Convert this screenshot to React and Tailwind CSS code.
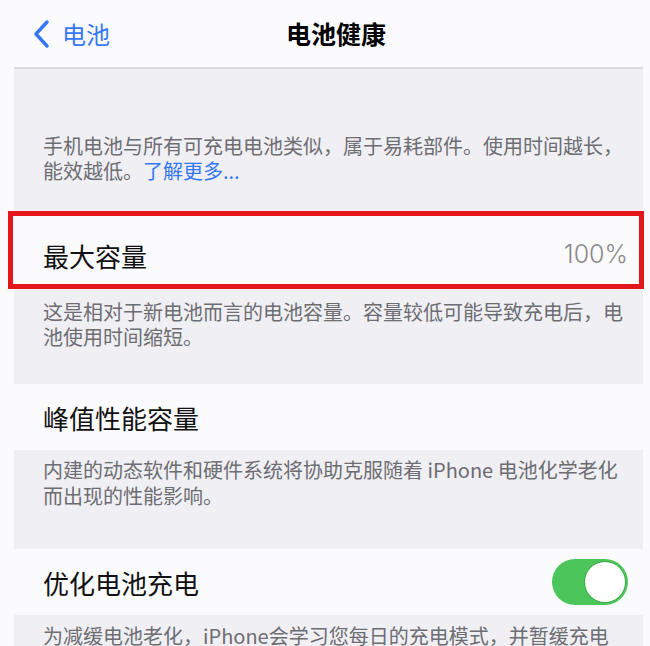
import React, { useState } from "react";

const cjk = { fontFamily: '"Noto Sans CJK SC", "Noto Sans", sans-serif' };

// iOS style on/off switch
function Toggle({ on, onChange }) {
  return (
    <button
      onClick={() => onChange(!on)}
      className={`flex h-[46px] w-[76px] items-center rounded-full p-[3px] transition ${
        on ? "justify-end bg-[#4cc55a]" : "justify-start bg-[#e5e5ea]"
      }`}
    >
      <span className="h-[40px] w-[40px] rounded-full bg-white shadow-[0_0_0_1px_rgba(40,120,40,0.35)]" />
    </button>
  );
}

function Footer({ className, children }) {
  return (
    <div
      className={`bg-[#efeff4] pl-[29px] pr-[12px] text-[20px] leading-[25px] text-[#6d6d72] ${className}`}
    >
      {children}
    </div>
  );
}

function Row({ title, className = "", children }) {
  return (
    <div className={`flex items-center justify-between bg-[#fbfbfd] pl-[29px] pr-[15px] ${className}`}>
      <span className="text-[26px] text-[#111]">{title}</span>
      {children}
    </div>
  );
}

export default function App() {
  const [optimized, setOptimized] = useState(true);

  return (
    <div className="h-[646px] overflow-hidden bg-[#fbfbfd]" style={cjk}>
      <div className="ml-[14px] mr-[7px]">
        {/* nav bar */}
        <header className="grid h-[67px] grid-cols-[1fr_auto_1fr] items-center pl-[19px] pr-[4px]">
          <button className="flex items-center gap-[12px] text-[#3478f6]">
            <svg width="17" height="28" viewBox="0 0 17 28" fill="none">
              <path d="M14 2 L3 14 L14 26" stroke="currentColor" strokeWidth="3.4" strokeLinecap="round" strokeLinejoin="round" />
            </svg>
            <span className="text-[24px] leading-none">电池</span>
          </button>
          <h1 className="text-[25px] font-bold leading-none text-black">电池健康</h1>
          <span />
        </header>
        <div className="h-[2px] bg-[#d9d9de]" />

        <Footer className="flex h-[142px] flex-col justify-end pb-[28px]">
          <p>
            手机电池与所有可充电电池类似，属于易耗部件。使用时间越长，
            <br />
            能效越低。<span className="text-[#3478f6]">了解更多...</span>
          </p>
        </Footer>

        <div className="relative">
          <Row title="最大容量" className="h-[77px] pt-[11px]">
            <span className="text-[25px] font-light text-[#8a8a8e]" style={{ fontFamily: "Inter, sans-serif" }}>
              100%
            </span>
          </Row>
          <div className="pointer-events-none absolute -left-[6px] -right-[1px] top-0 -bottom-[1px] border-[5px] border-[#e3161c]" />
        </div>

        <Footer className="h-[96px] pt-[11px]">
          <p>
            这是相对于新电池而言的电池容量。容量较低可能导致充电后，电
            <br />
            池使用时间缩短。
          </p>
        </Footer>

        <Row title="峰值性能容量" className="h-[66px]" />

        <Footer className="h-[99px] pt-[7px]">
          <p className="leading-[26px]">
            内建的动态软件和硬件系统将协助克服随着 iPhone 电池化学老化
            <br />
            而出现的性能影响。
          </p>
        </Footer>

        <Row title="优化电池充电" className="h-[66px]">
          <Toggle on={optimized} onChange={setOptimized} />
        </Row>

        <Footer className="h-[60px] pt-[8px]">
          <p>为减缓电池老化，iPhone会学习您每日的充电模式，并暂缓充电</p>
        </Footer>
      </div>
    </div>
  );
}
